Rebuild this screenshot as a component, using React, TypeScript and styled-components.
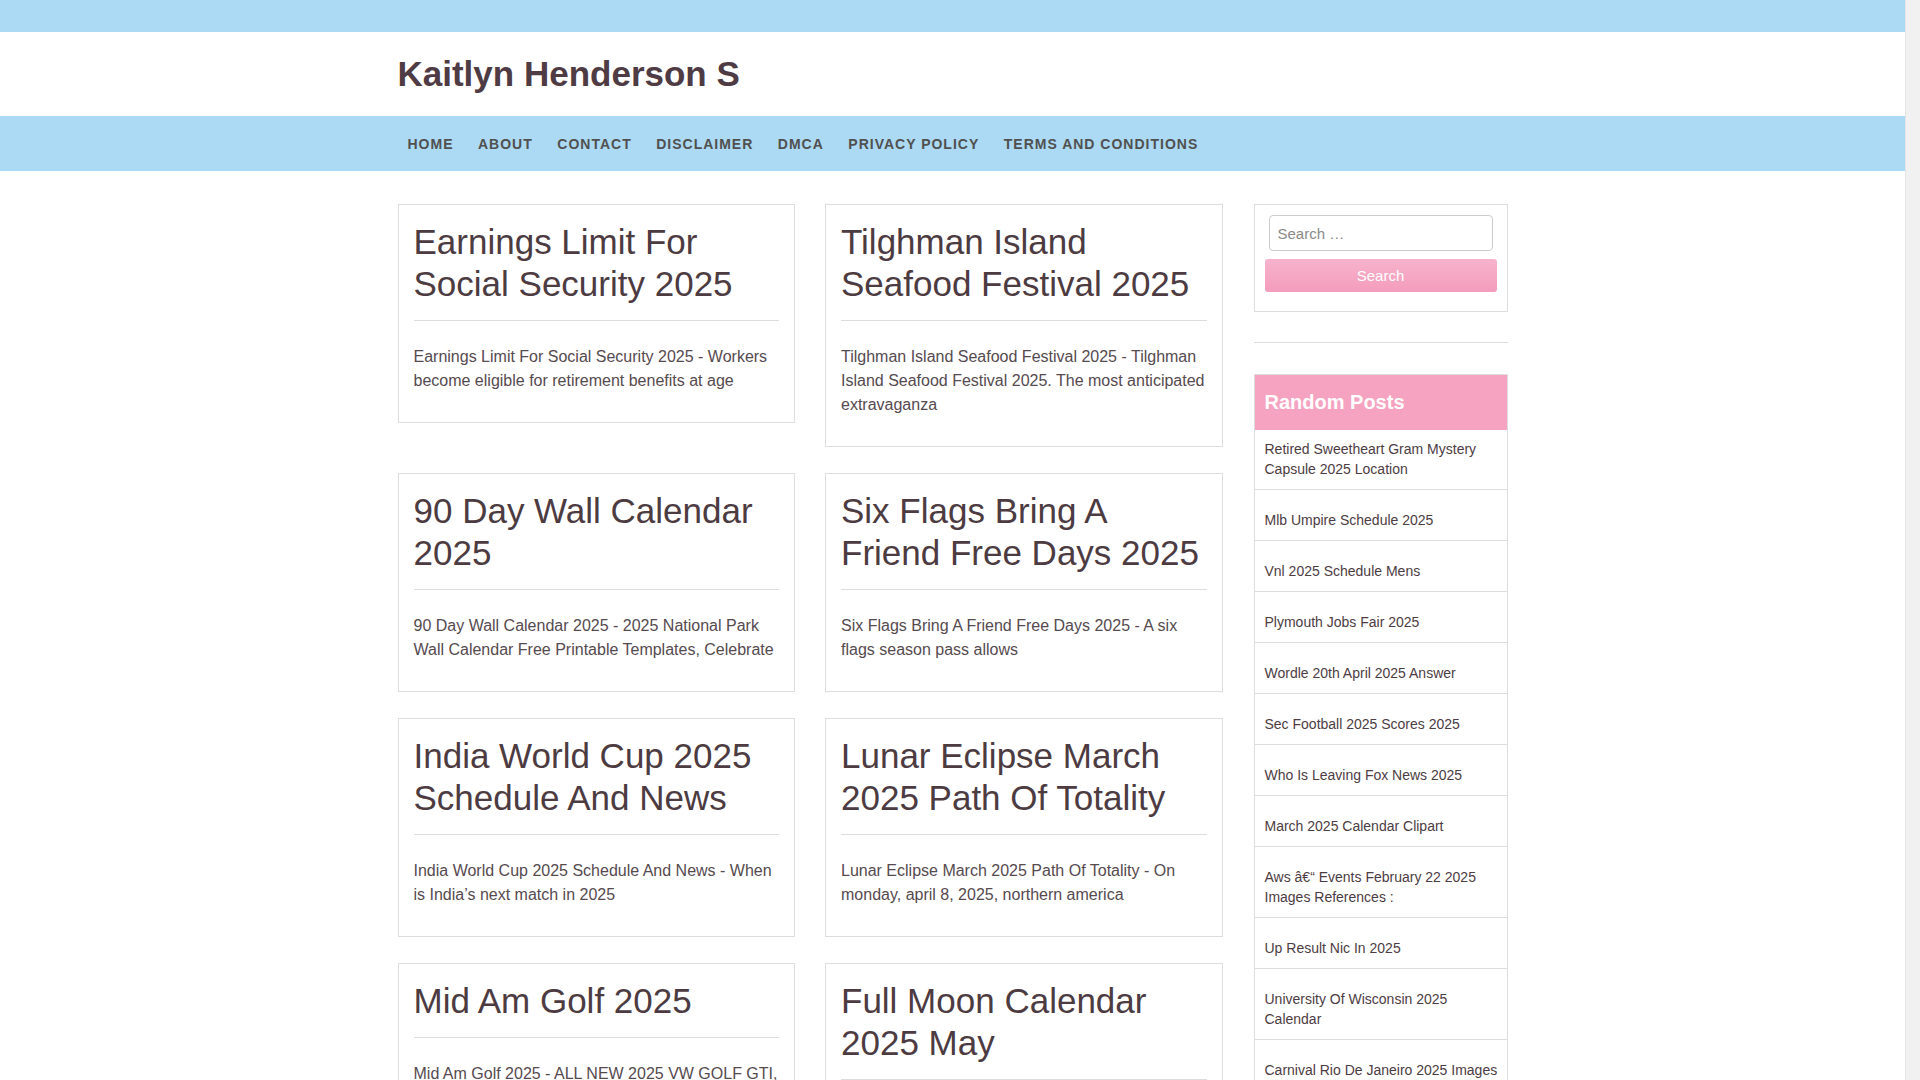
import React from "react";
import styled, { createGlobalStyle } from "styled-components";

const GlobalStyle = createGlobalStyle`
  html, body {
    margin: 0;
    padding: 0;
    background: #fff;
    font-family: "Liberation Sans", Arial, sans-serif;
    color: #4d3c43;
  }
  body {
    margin-right: 15px;
  }
  * {
    box-sizing: border-box;
  }
`;

// the reference was taken with a classic 15px scrollbar on the right
const ScrollTrack = styled.div`
  position: fixed;
  top: 0;
  right: 0;
  width: 15px;
  height: 100vh;
  background-color: #f1f1f1;
  border-left: 1px solid #e6e6e6;
`;

const TopBar = styled.div`
  height: 32px;
  background-color: #acd9f3;
`;

const Container = styled.div`
  width: 1110px;
  margin: 0 auto;
`;

const Header = styled.header`
  height: 84px;
  display: flex;
  align-items: center;
`;

const SiteTitle = styled.a`
  font-size: 35px;
  font-weight: bold;
  color: #4f3b43;
  text-decoration: none;
  line-height: 42px;
`;

const NavBar = styled.nav`
  height: 55px;
  background-color: #acd9f3;
`;

const Nav = styled.ul`
  list-style-type: none;
  display: flex;
  height: 55px;
  margin: 0 auto;
  padding: 0;
  width: 1110px;
`;

const NavItem = styled.li`
  display: flex;
  align-items: center;
`;

const NavLink = styled.a`
  padding: 0 12.5px 0 10px;
  margin-right: 2px;
  color: #505050;
  font-size: 14px;
  font-weight: bold;
  letter-spacing: 1px;
  text-transform: uppercase;
  text-decoration: none;
`;

const Main = styled.div`
  width: 1110px;
  margin: 33px auto 0;
  display: grid;
  grid-template-columns: 1fr 254px;
  column-gap: 31px;
`;

const Posts = styled.div`
  display: grid;
  grid-template-columns: 1fr 1fr;
  column-gap: 30px;
  row-gap: 26px;
  align-items: start;
`;

const Card = styled.article`
  border: 1px solid #dddddd;
  padding: 16px 15px 15px;
`;

const CardTitle = styled.h2`
  margin: 0 0 15px;
  font-size: 35px;
  font-weight: normal;
  line-height: 42px;
  color: #4d3b42;
`;

const Divider = styled.div`
  border-top: 1px solid #dddddd;
`;

const Excerpt = styled.p`
  margin: 24px 0 14px;
  font-size: 16px;
  line-height: 24px;
  color: #564a4f;
`;

const Sidebar = styled.aside`
  display: flex;
  flex-direction: column;
`;

const SearchBox = styled.form`
  border: 1px solid #dddddd;
  padding: 10px 10px 19px;
  display: flex;
  flex-direction: column;
  gap: 8px;
`;

const SearchInput = styled.input`
  margin: 0 4px;
  height: 36px;
  border: 1px solid #cccccc;
  border-radius: 4px;
  padding: 6px 8px;
  font-family: "Liberation Sans", Arial, sans-serif;
  font-size: 15px;
  color: #555;
  &::placeholder {
    color: #8a8a8a;
  }
`;

const SearchButton = styled.button`
  height: 33px;
  border: none;
  border-radius: 3px;
  background: linear-gradient(#f7b3cb, #f39cbb);
  color: #ffffff;
  font-family: "Liberation Sans", Arial, sans-serif;
  font-size: 15px;
  cursor: pointer;
`;

const Separator = styled.div`
  margin: 30px 0 31px;
  border-top: 1px solid #dddddd;
`;

const Widget = styled.section`
  border: 1px solid #dddddd;
`;

const WidgetTitle = styled.h3`
  margin: 0;
  padding: 15px 10px;
  font-size: 20px;
  line-height: 25px;
  font-weight: bold;
  color: #ffffff;
  background-color: #f5a3c0;
`;

const PostList = styled.ul`
  list-style-type: none;
  margin: 0;
  padding: 0;
`;

const PostItem = styled.li`
  padding: 20px 5px 10px 10px;
  border-bottom: 1px solid #dddddd;
  &:first-child {
    padding-top: 9px;
  }
`;

const PostLink = styled.a`
  font-size: 14px;
  line-height: 20px;
  color: #4d3c43;
  text-decoration: none;
`;

const posts = [
  {
    title: "Earnings Limit For Social Security 2025",
    excerpt:
      "Earnings Limit For Social Security 2025 - Workers become eligible for retirement benefits at age",
  },
  {
    title: "Tilghman Island Seafood Festival 2025",
    excerpt:
      "Tilghman Island Seafood Festival 2025 - Tilghman Island Seafood Festival 2025. The most anticipated extravaganza",
  },
  {
    title: "90 Day Wall Calendar 2025",
    excerpt:
      "90 Day Wall Calendar 2025 - 2025 National Park Wall Calendar Free Printable Templates, Celebrate",
  },
  {
    title: "Six Flags Bring A Friend Free Days 2025",
    excerpt: "Six Flags Bring A Friend Free Days 2025 - A six flags season pass allows",
  },
  {
    title: "India World Cup 2025 Schedule And News",
    excerpt:
      "India World Cup 2025 Schedule And News - When is India\u2019s next match in 2025",
  },
  {
    title: "Lunar Eclipse March 2025 Path Of Totality",
    excerpt:
      "Lunar Eclipse March 2025 Path Of Totality - On monday, april 8, 2025, northern america",
  },
  {
    title: "Mid Am Golf 2025",
    excerpt: "Mid Am Golf 2025 - ALL NEW 2025 VW GOLF GTI, the iconic hot hatch",
  },
  {
    title: "Full Moon Calendar 2025 May",
    excerpt: "Full Moon Calendar 2025 May - The full moon calendar for the year",
  },
];

const randomPosts = [
  "Retired Sweetheart Gram Mystery Capsule 2025 Location",
  "Mlb Umpire Schedule 2025",
  "Vnl 2025 Schedule Mens",
  "Plymouth Jobs Fair 2025",
  "Wordle 20th April 2025 Answer",
  "Sec Football 2025 Scores 2025",
  "Who Is Leaving Fox News 2025",
  "March 2025 Calendar Clipart",
  "Aws \u00e2\u20ac\u201c Events February 22 2025 Images References :",
  "Up Result Nic In 2025",
  "University Of Wisconsin 2025 Calendar",
  "Carnival Rio De Janeiro 2025 Images Free",
];

const navList = [
  "Home",
  "About",
  "Contact",
  "Disclaimer",
  "DMCA",
  "Privacy Policy",
  "Terms and Conditions",
];

function App() {
  return (
    <>
      <GlobalStyle />
      <TopBar />
      <Container>
        <Header>
          <SiteTitle href="#">Kaitlyn Henderson S</SiteTitle>
        </Header>
      </Container>
      <NavBar>
        <Nav>
          {navList.map((x) => (
            <NavItem key={x}>
              <NavLink href="#">{x}</NavLink>
            </NavItem>
          ))}
        </Nav>
      </NavBar>
      <Main>
        <Posts>
          {posts.map((p) => (
            <Card key={p.title}>
              <CardTitle>{p.title}</CardTitle>
              <Divider />
              <Excerpt>{p.excerpt}</Excerpt>
            </Card>
          ))}
        </Posts>
        <Sidebar>
          <SearchBox onSubmit={(e) => e.preventDefault()}>
            <SearchInput type="search" placeholder="Search &hellip;" />
            <SearchButton type="submit">Search</SearchButton>
          </SearchBox>
          <Separator />
          <Widget>
            <WidgetTitle>Random Posts</WidgetTitle>
            <PostList>
              {randomPosts.map((t) => (
                <PostItem key={t}>
                  <PostLink href="#">{t}</PostLink>
                </PostItem>
              ))}
            </PostList>
          </Widget>
        </Sidebar>
      </Main>
      <ScrollTrack />
    </>
  );
}

export default App;
